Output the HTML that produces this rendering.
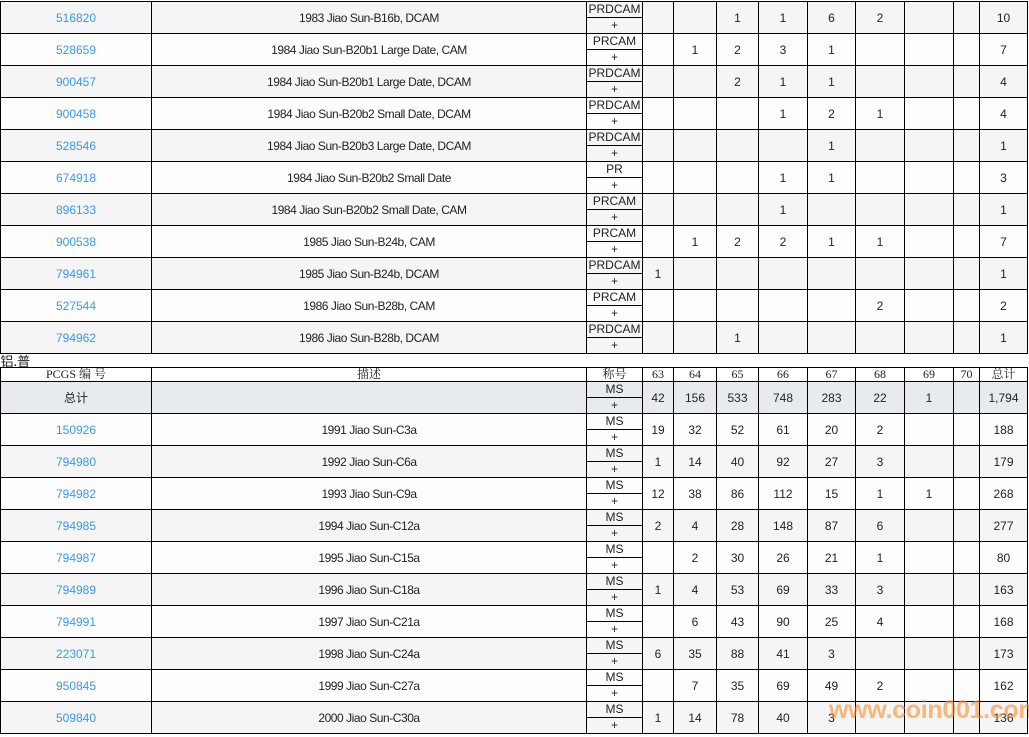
<!DOCTYPE html>
<html><head><meta charset="utf-8"><style>
body{margin:0;background:#fff;width:1029px;height:737px;overflow:hidden;position:relative;font-family:"Liberation Sans",Arial,sans-serif;font-size:12px;color:#222}
table{position:absolute;left:0;border-collapse:collapse;table-layout:fixed;width:1028px}
td{border:1px solid #000;padding:0;text-align:center;height:31px;overflow:hidden;white-space:nowrap}
td:nth-child(2){letter-spacing:-0.45px}
td.g{vertical-align:top;letter-spacing:0}
.g div{height:15px;line-height:15px}
.g div:first-child{border-bottom:1px solid #000}
a{color:#3a9ae0;text-decoration:none}
tr.a td{background:#f5f5f5}
tr.b td{background:#fdfdfd}
tr.t td{background:#e7ebef}
tr.h td{height:13px;line-height:13px;font-family:"Liberation Serif","Noto Serif CJK SC",serif;background:#fff;letter-spacing:0}
tr.s td{border-left:none;border-right:none;border-top:none;height:13px;text-align:left;line-height:13px;font-family:"Noto Sans CJK SC",sans-serif;background:#fff;font-size:13px}
.wm{position:absolute;left:829px;top:696px;font:bold 25px "Liberation Sans",sans-serif;color:rgba(248,140,40,0.6);letter-spacing:-0.3px}
</style></head><body>
<table style="top:1px">
<colgroup><col style="width:151px"><col style="width:435px"><col style="width:56px"><col style="width:31px"><col style="width:43px"><col style="width:42px"><col style="width:49px"><col style="width:48px"><col style="width:49px"><col style="width:49px"><col style="width:26px"><col style="width:48px"></colgroup>
<tr class="a"><td><a>516820</a></td><td>1983 Jiao Sun-B16b, DCAM</td><td class="g"><div>PRDCAM</div><div>+</div></td><td></td><td></td><td>1</td><td>1</td><td>6</td><td>2</td><td></td><td></td><td>10</td></tr>
<tr class="b"><td><a>528659</a></td><td>1984 Jiao Sun-B20b1 Large Date, CAM</td><td class="g"><div>PRCAM</div><div>+</div></td><td></td><td>1</td><td>2</td><td>3</td><td>1</td><td></td><td></td><td></td><td>7</td></tr>
<tr class="a"><td><a>900457</a></td><td>1984 Jiao Sun-B20b1 Large Date, DCAM</td><td class="g"><div>PRDCAM</div><div>+</div></td><td></td><td></td><td>2</td><td>1</td><td>1</td><td></td><td></td><td></td><td>4</td></tr>
<tr class="b"><td><a>900458</a></td><td>1984 Jiao Sun-B20b2 Small Date, DCAM</td><td class="g"><div>PRDCAM</div><div>+</div></td><td></td><td></td><td></td><td>1</td><td>2</td><td>1</td><td></td><td></td><td>4</td></tr>
<tr class="a"><td><a>528546</a></td><td>1984 Jiao Sun-B20b3 Large Date, DCAM</td><td class="g"><div>PRDCAM</div><div>+</div></td><td></td><td></td><td></td><td></td><td>1</td><td></td><td></td><td></td><td>1</td></tr>
<tr class="b"><td><a>674918</a></td><td>1984 Jiao Sun-B20b2 Small Date</td><td class="g"><div>PR</div><div>+</div></td><td></td><td></td><td></td><td>1</td><td>1</td><td></td><td></td><td></td><td>3</td></tr>
<tr class="a"><td><a>896133</a></td><td>1984 Jiao Sun-B20b2 Small Date, CAM</td><td class="g"><div>PRCAM</div><div>+</div></td><td></td><td></td><td></td><td>1</td><td></td><td></td><td></td><td></td><td>1</td></tr>
<tr class="b"><td><a>900538</a></td><td>1985 Jiao Sun-B24b, CAM</td><td class="g"><div>PRCAM</div><div>+</div></td><td></td><td>1</td><td>2</td><td>2</td><td>1</td><td>1</td><td></td><td></td><td>7</td></tr>
<tr class="a"><td><a>794961</a></td><td>1985 Jiao Sun-B24b, DCAM</td><td class="g"><div>PRDCAM</div><div>+</div></td><td>1</td><td></td><td></td><td></td><td></td><td></td><td></td><td></td><td>1</td></tr>
<tr class="b"><td><a>527544</a></td><td>1986 Jiao Sun-B28b, CAM</td><td class="g"><div>PRCAM</div><div>+</div></td><td></td><td></td><td></td><td></td><td></td><td>2</td><td></td><td></td><td>2</td></tr>
<tr class="a"><td><a>794962</a></td><td>1986 Jiao Sun-B28b, DCAM</td><td class="g"><div>PRDCAM</div><div>+</div></td><td></td><td></td><td>1</td><td></td><td></td><td></td><td></td><td></td><td>1</td></tr>
<tr class="s"><td colspan="12">铝.普</td></tr>
<tr class="h"><td>PCGS 编 号</td><td>描述</td><td>称号</td><td>63</td><td>64</td><td>65</td><td>66</td><td>67</td><td>68</td><td>69</td><td>70</td><td>总计</td></tr>
<tr class="t"><td style="font-family:'Noto Sans CJK SC',sans-serif">总计</td><td></td><td class="g"><div>MS</div><div>+</div></td><td>42</td><td>156</td><td>533</td><td>748</td><td>283</td><td>22</td><td>1</td><td></td><td>1,794</td></tr>
<tr class="b"><td><a>150926</a></td><td>1991 Jiao Sun-C3a</td><td class="g"><div>MS</div><div>+</div></td><td>19</td><td>32</td><td>52</td><td>61</td><td>20</td><td>2</td><td></td><td></td><td>188</td></tr>
<tr class="a"><td><a>794980</a></td><td>1992 Jiao Sun-C6a</td><td class="g"><div>MS</div><div>+</div></td><td>1</td><td>14</td><td>40</td><td>92</td><td>27</td><td>3</td><td></td><td></td><td>179</td></tr>
<tr class="b"><td><a>794982</a></td><td>1993 Jiao Sun-C9a</td><td class="g"><div>MS</div><div>+</div></td><td>12</td><td>38</td><td>86</td><td>112</td><td>15</td><td>1</td><td>1</td><td></td><td>268</td></tr>
<tr class="a"><td><a>794985</a></td><td>1994 Jiao Sun-C12a</td><td class="g"><div>MS</div><div>+</div></td><td>2</td><td>4</td><td>28</td><td>148</td><td>87</td><td>6</td><td></td><td></td><td>277</td></tr>
<tr class="b"><td><a>794987</a></td><td>1995 Jiao Sun-C15a</td><td class="g"><div>MS</div><div>+</div></td><td></td><td>2</td><td>30</td><td>26</td><td>21</td><td>1</td><td></td><td></td><td>80</td></tr>
<tr class="a"><td><a>794989</a></td><td>1996 Jiao Sun-C18a</td><td class="g"><div>MS</div><div>+</div></td><td>1</td><td>4</td><td>53</td><td>69</td><td>33</td><td>3</td><td></td><td></td><td>163</td></tr>
<tr class="b"><td><a>794991</a></td><td>1997 Jiao Sun-C21a</td><td class="g"><div>MS</div><div>+</div></td><td></td><td>6</td><td>43</td><td>90</td><td>25</td><td>4</td><td></td><td></td><td>168</td></tr>
<tr class="a"><td><a>223071</a></td><td>1998 Jiao Sun-C24a</td><td class="g"><div>MS</div><div>+</div></td><td>6</td><td>35</td><td>88</td><td>41</td><td>3</td><td></td><td></td><td></td><td>173</td></tr>
<tr class="b"><td><a>950845</a></td><td>1999 Jiao Sun-C27a</td><td class="g"><div>MS</div><div>+</div></td><td></td><td>7</td><td>35</td><td>69</td><td>49</td><td>2</td><td></td><td></td><td>162</td></tr>
<tr class="a"><td><a>509840</a></td><td>2000 Jiao Sun-C30a</td><td class="g"><div>MS</div><div>+</div></td><td>1</td><td>14</td><td>78</td><td>40</td><td>3</td><td></td><td></td><td></td><td>136</td></tr>
</table>
<div class="wm">www.coin001.com</div>
</body></html>
